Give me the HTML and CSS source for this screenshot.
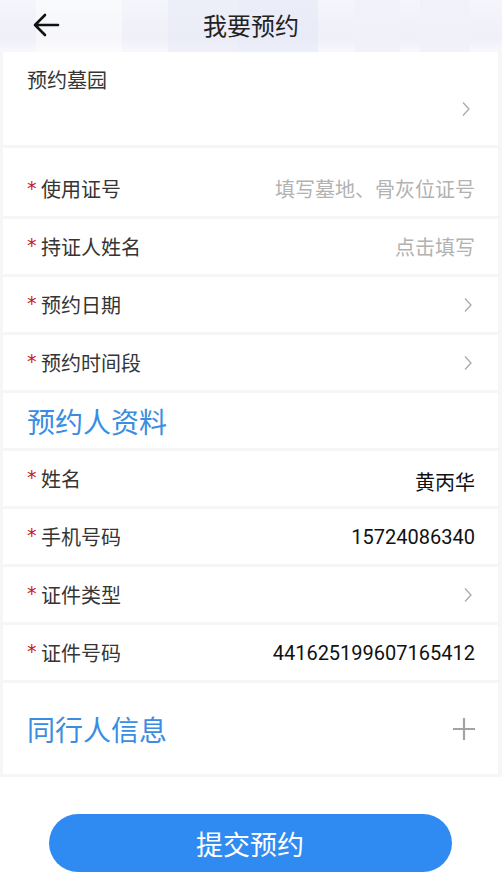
FILE: index.html
```html
<!DOCTYPE html>
<html lang="zh-CN">
<head>
<meta charset="utf-8">
<title>我要预约</title>
<link rel="stylesheet" href="styles.css">
</head>
<body>
<header class="topbar">
  <span class="back">
    <svg width="28" height="24" viewBox="0 0 28 24"><path d="M26 12H3M13 2L3 12l10 10" fill="none" stroke="#111" stroke-width="2.6" stroke-linecap="round" stroke-linejoin="round"/></svg>
  </span>
  <h1 class="title">我要预约</h1>
</header>
<main class="form">
  <div class="row row-cemetery">
    <div class="label">预约墓园</div>
    <div class="cemetery-arrow"><svg class="chev" width="10" height="16" viewBox="0 0 10 16"><path d="M2 1.5l6 6.5-6 6.5" fill="none" stroke="#aaa" stroke-width="1.3"/></svg></div>
  </div>
  <div class="row row-cert">
    <div class="label"><span class="star">*</span>使用证号</div>
    <div class="placeholder">填写墓地、骨灰位证号</div>
  </div>
  <div class="row">
    <div class="label"><span class="star">*</span>持证人姓名</div>
    <div class="placeholder">点击填写</div>
  </div>
  <div class="row">
    <div class="label"><span class="star">*</span>预约日期</div>
    <svg class="chev" width="10" height="16" viewBox="0 0 10 16"><path d="M2 1.5l6 6.5-6 6.5" fill="none" stroke="#aaa" stroke-width="1.3"/></svg>
  </div>
  <div class="row">
    <div class="label"><span class="star">*</span>预约时间段</div>
    <svg class="chev" width="10" height="16" viewBox="0 0 10 16"><path d="M2 1.5l6 6.5-6 6.5" fill="none" stroke="#aaa" stroke-width="1.3"/></svg>
  </div>
  <div class="row section">
    <div class="section-title">预约人资料</div>
  </div>
  <div class="row">
    <div class="label"><span class="star">*</span>姓名</div>
    <div class="value value-name">黄丙华</div>
  </div>
  <div class="row">
    <div class="label"><span class="star">*</span>手机号码</div>
    <div class="value">15724086340</div>
  </div>
  <div class="row">
    <div class="label"><span class="star">*</span>证件类型</div>
    <svg class="chev" width="10" height="16" viewBox="0 0 10 16"><path d="M2 1.5l6 6.5-6 6.5" fill="none" stroke="#aaa" stroke-width="1.3"/></svg>
  </div>
  <div class="row">
    <div class="label"><span class="star">*</span>证件号码</div>
    <div class="value">441625199607165412</div>
  </div>
  <div class="row section companions">
    <div class="section-title">同行人信息</div>
    <svg class="plus" width="24" height="24" viewBox="0 0 24 24"><path d="M12 1v22M1 12h22" fill="none" stroke="#a3a3a3" stroke-width="2.2"/></svg>
  </div>
  <div class="footer">
    <button class="submit" type="button">提交预约</button>
  </div>
</main>
</body>
</html>
```
FILE: styles.css
```css
* { box-sizing: border-box; }
html, body { margin: 0; padding: 0; }
body {
  width: 502px;
  height: 878px;
  overflow: hidden;
  background: #f6f6f7;
  font-family: "Noto Sans CJK SC", "Noto Sans", sans-serif;
  color: #333;
}
.topbar {
  height: 52px;
  display: flex;
  align-items: center;
  justify-content: center;
  position: relative;
  background-color: #f3f4fa;
  background-image:
    linear-gradient(90deg, transparent 0, transparent 36px, rgba(255,255,255,0.45) 36px, rgba(255,255,255,0.45) 122px, transparent 122px),
    linear-gradient(90deg, transparent 0, transparent 168px, rgba(232,234,247,0.6) 168px, rgba(232,234,247,0.6) 238px, transparent 238px),
    linear-gradient(90deg, transparent 0, transparent 238px, rgba(226,230,247,0.5) 238px, rgba(226,230,247,0.5) 318px, transparent 318px),
    linear-gradient(90deg, transparent 0, transparent 355px, rgba(240,241,249,0.8) 355px, rgba(240,241,249,0.8) 400px, transparent 400px, transparent 420px, rgba(240,241,249,0.8) 420px, rgba(240,241,249,0.8) 470px, transparent 470px),
    linear-gradient(180deg, #f5f6fb 0, #eff0f8 38px, #f8f8fc 52px);
}
.back {
  position: absolute;
  left: 32px;
  top: 13px;
  display: flex;
}
.title {
  margin: 0;
  font-size: 24px;
  font-weight: 400;
  color: #222;
  line-height: 1;
  margin-top: -2px;
}
.form {
  display: flex;
  flex-direction: column;
  gap: 3px;
  padding: 0 4px 0 3px;
}
.row {
  height: 55px;
  background: #fff;
  display: flex;
  align-items: center;
  justify-content: space-between;
  padding: 0 23px 0 24px;
}
.row-cemetery {
  height: 93px;
  flex-direction: column;
  align-items: stretch;
  justify-content: flex-start;
  padding-top: 15px;
}
.cemetery-arrow {
  display: flex;
  justify-content: flex-end;
  margin-top: 8px;
  padding-right: 2px;
}
.row-cert {
  height: 68px;
  align-items: flex-end;
  padding-bottom: 14px;
}
.label {
  font-size: 20px;
  line-height: 26px;
  color: #353535;
  display: flex;
  align-items: center;
}
.star {
  color: #c8161d;
  font-size: 19px;
  width: 14px;
  font-family: "DejaVu Sans", sans-serif;
  margin-top: -3px;
}
.placeholder {
  font-size: 20px;
  color: #b2b2b2;
  line-height: 26px;
}
.chev { margin-right: 2px; }
.value {
  font-family: Roboto, "Noto Sans CJK SC", sans-serif;
  font-size: 20px;
  color: #111;
  line-height: 26px;
}
.value-name {
  font-family: "Noto Sans CJK SC", sans-serif;
  font-size: 20px;
  margin-top: 6px;
}
.section-title {
  font-size: 28px;
  color: #3a8de0;
  line-height: 34px;
}
.companions {
  height: 91px;
}
.plus { margin-right: -1px; }
.footer {
  background: #fff;
  height: 104px;
  padding-top: 37px;
  display: flex;
  justify-content: center;
  margin: 0 -4px 0 -3px;
}
.submit {
  width: 403px;
  height: 58px;
  border: none;
  border-radius: 29px;
  background: #2f8bf1;
  color: #fff;
  font-family: "Noto Sans CJK SC", sans-serif;
  font-size: 27px;
  letter-spacing: 0;
  margin-left: -2px;
}
```
